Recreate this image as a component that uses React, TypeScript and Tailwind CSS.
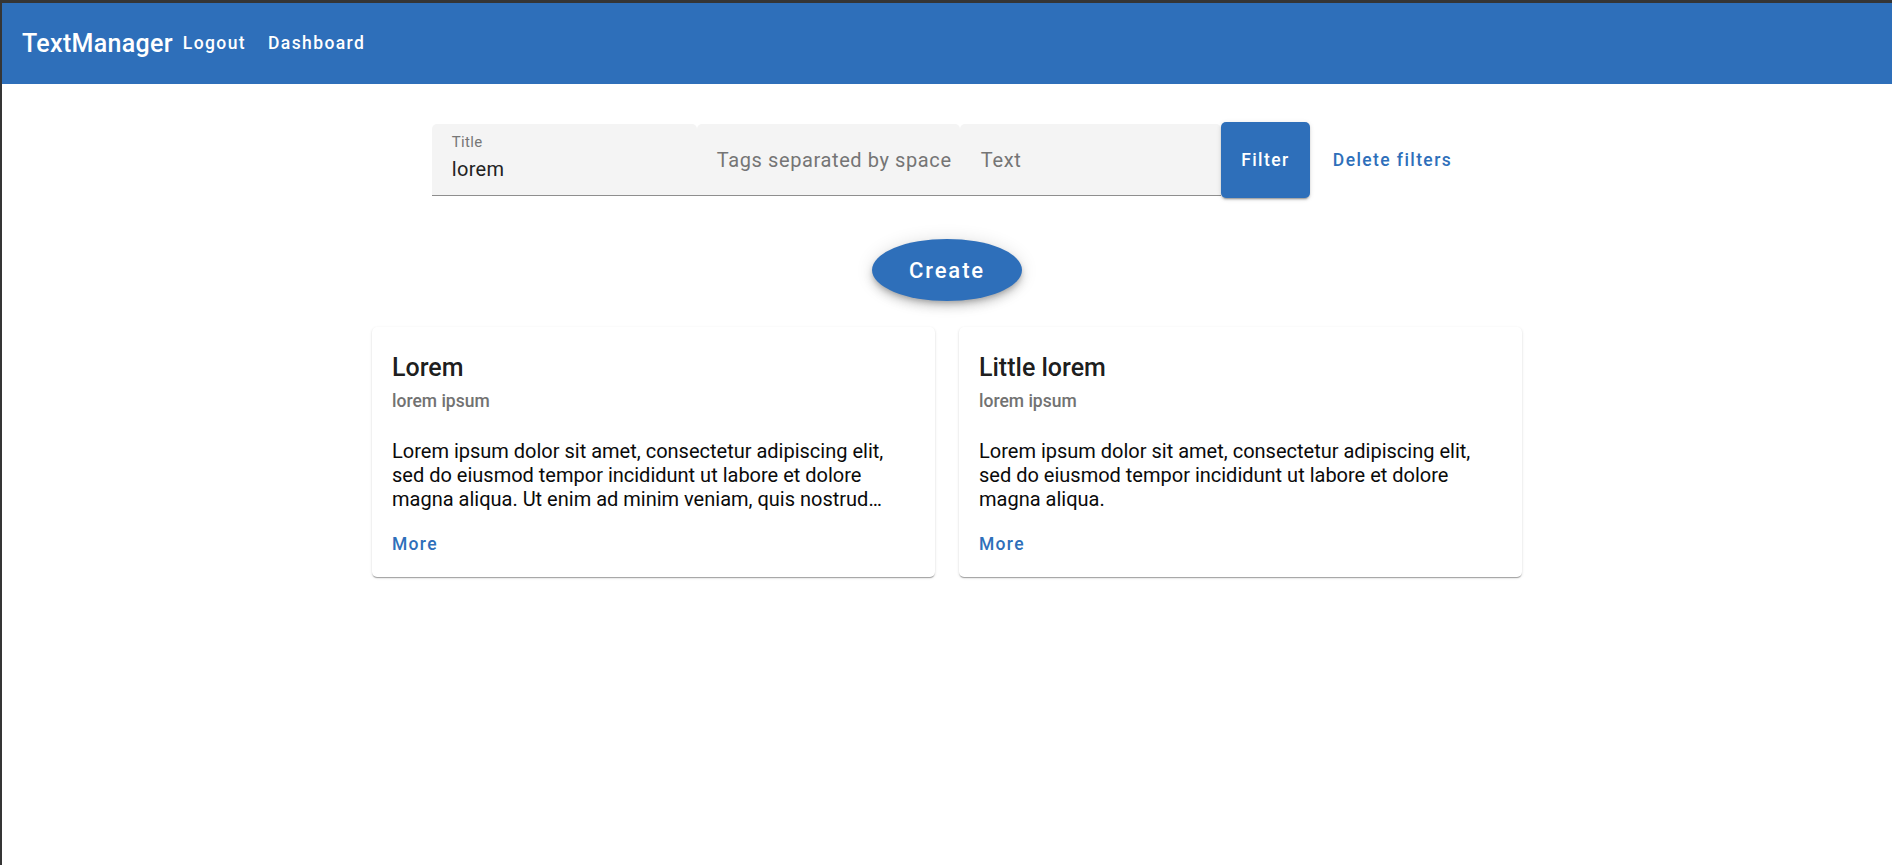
import React from "react"

const cards = [
  {
    title: "Lorem",
    subtitle: "lorem ipsum",
    text: "Lorem ipsum dolor sit amet, consectetur adipiscing elit, sed do eiusmod tempor incididunt ut labore et dolore magna aliqua. Ut enim ad minim veniam, quis nostrud exercitation ullamco laboris nisi ut aliquip ex ea commodo consequat.",
  },
  {
    title: "Little lorem",
    subtitle: "lorem ipsum",
    text: "Lorem ipsum dolor sit amet, consectetur adipiscing elit, sed do eiusmod tempor incididunt ut labore et dolore magna aliqua.",
  },
]

function Header() {
  return (
    <header className="flex h-[81px] items-center bg-[#2e6fba] pl-5 text-white">
      <div className="text-[25px] font-medium leading-[40px] tracking-[0.3px]">TextManager</div>
      <nav className="flex items-center">
        <button className="px-[10px] py-[7px] text-[17.5px] font-medium leading-[25px] tracking-[1.4px]">Logout</button>
        <button className="ml-[2px] px-[10px] py-[7px] text-[17.5px] font-medium leading-[25px] tracking-[1.4px]">Dashboard</button>
      </nav>
    </header>
  )
}

function FilterBar() {
  return (
    <div className="mt-[38px] flex h-[76px] items-center justify-center">
      <div className="flex h-[72px] w-[265px] flex-col rounded-t-[5px] border-b border-[#8e8e8e] bg-[#f4f4f4] px-5 pt-[9px]">
        <span className="text-[15px] leading-[18px] tracking-[0.3px] text-[#777]">Title</span>
        <span className="mt-[6px] text-[20px] leading-[24px] tracking-[0.3px] text-[#222]">lorem</span>
      </div>
      <div className="flex h-[72px] w-[263px] items-center rounded-t-[5px] border-b border-[#8e8e8e] bg-[#f4f4f4] px-5">
        <span className="whitespace-nowrap text-[20px] leading-[24px] tracking-[0.6px] text-[#757575]">Tags separated by space</span>
      </div>
      <div className="flex h-[72px] w-[261px] items-center rounded-t-[5px] border-b border-[#8e8e8e] bg-[#f4f4f4] pl-[21px] pr-5">
        <span className="text-[20px] leading-[24px] tracking-[0.6px] text-[#757575]">Text</span>
      </div>
      <button className="h-[76px] w-[89px] rounded-[5px] bg-[#2e6fba] text-[17.5px] font-medium tracking-[1.4px] text-white shadow-[0px_3px_1px_-2px_rgba(0,0,0,0.2),0px_2px_2px_0px_rgba(0,0,0,0.14),0px_1px_5px_0px_rgba(0,0,0,0.12)]">
        Filter
      </button>
      <button className="ml-[13px] px-[10px] py-[7px] text-[17.5px] font-medium leading-[25px] tracking-[1.4px] text-[#2e6fba]">
        Delete filters
      </button>
    </div>
  )
}

function TextCard({ title, subtitle, text }: { title: string; subtitle: string; text: string }) {
  return (
    <div className="h-[250px] rounded-[5px] bg-white px-5 pt-6 shadow-[0px_2px_1px_-1px_rgba(0,0,0,0.2),0px_1px_1px_0px_rgba(0,0,0,0.14),0px_1px_3px_0px_rgba(0,0,0,0.12)]">
      <div className="text-[25px] font-medium leading-[33px] text-[rgba(0,0,0,0.9)]">{title}</div>
      <div className="mt-[4.5px] text-[17.5px] font-medium leading-[25px] text-[#727272]">{subtitle}</div>
      <p className="mt-[25.5px] line-clamp-3 text-[20px] leading-[24px] text-[#0a0a0a]">{text}</p>
      <button className="mt-[20.5px] text-[17.5px] font-medium leading-[25px] tracking-[1.3px] text-[#2e6fba]">More</button>
    </div>
  )
}

export default function App() {
  return (
    <div className="min-h-screen border-l-2 border-t-[3px] border-[#353535] bg-white font-['Roboto',sans-serif]">
      <Header />
      <FilterBar />
      <div className="mt-[41px] flex justify-center">
        <button className="h-[62px] w-[150px] rounded-[50%] bg-[#2e6fba] text-[22px] font-medium tracking-[1.9px] text-white shadow-[0px_3px_5px_-1px_rgba(0,0,0,0.2),0px_6px_10px_0px_rgba(0,0,0,0.14),0px_1px_18px_0px_rgba(0,0,0,0.12)]">
          Create
        </button>
      </div>
      <div className="mx-auto mt-[26px] grid w-[1150px] grid-cols-2 gap-6">
        {cards.map((c) => (
          <TextCard key={c.title} {...c} />
        ))}
      </div>
    </div>
  )
}
